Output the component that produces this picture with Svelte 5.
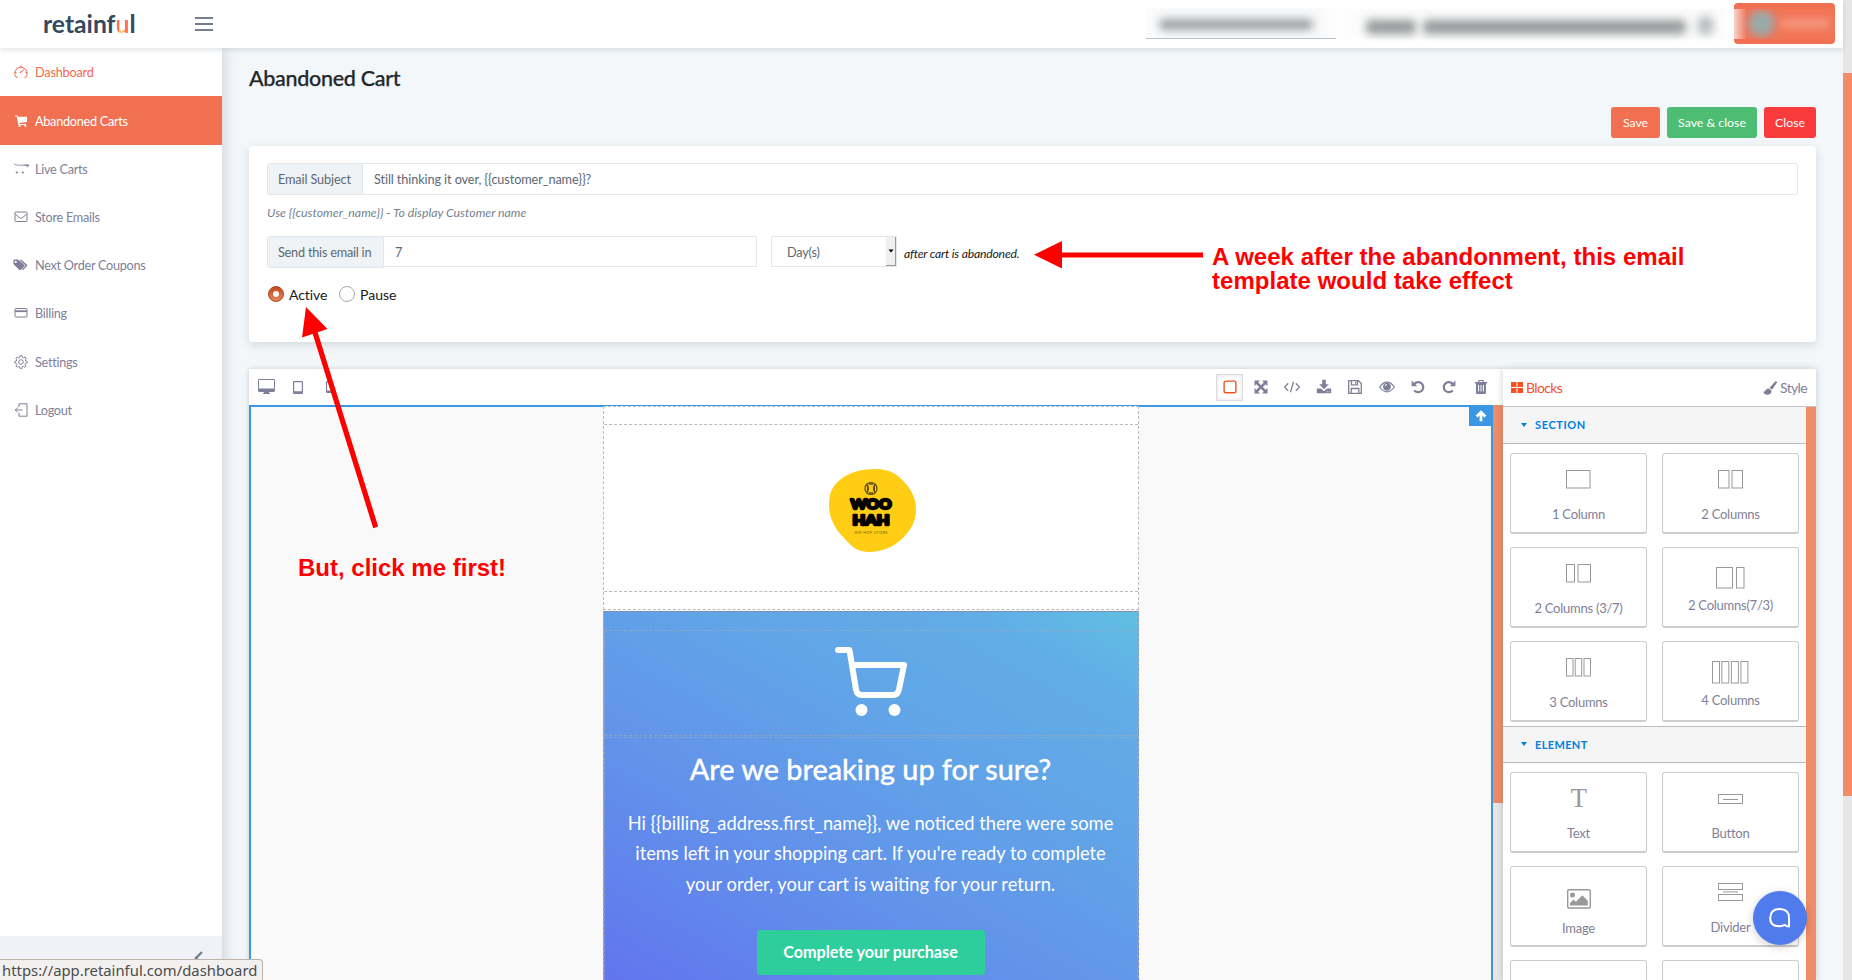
<script>
  const nav = [
    { icon: 'gauge', label: 'Dashboard', tone: 'hot' },
    { icon: 'cart', label: 'Abandoned Carts', tone: 'active' },
    { icon: 'opencart', label: 'Live Carts' },
    { icon: 'mail', label: 'Store Emails' },
    { icon: 'tags', label: 'Next Order Coupons' },
    { icon: 'card', label: 'Billing' },
    { icon: 'gear', label: 'Settings' },
    { icon: 'exit', label: 'Logout' }
  ];
  const tools = ['square', 'expand', 'code', 'download', 'floppy', 'eye', 'undo', 'redo', 'trash'];
  const sections = [
    { icon: 'c1', label: '1 Column' },
    { icon: 'c2', label: '2 Columns' },
    { icon: 'c37', label: '2 Columns (3/7)' },
    { icon: 'c73', label: '2 Columns(7/3)', low: true },
    { icon: 'c3', label: '3 Columns' },
    { icon: 'c4', label: '4 Columns', low: true }
  ];
  const elements = [
    { icon: 'text', label: 'Text' },
    { icon: 'button', label: 'Button' },
    { icon: 'image', label: 'Image', img: true },
    { icon: 'divider', label: 'Divider' },
    { icon: '', label: '' },
    { icon: '', label: '' }
  ];
  const boxes = {
    c1: [[0, 24, 18]],
    c2: [[0, 11, 18], [13.5, 11, 18]],
    c37: [[0, 8.5, 18], [11.5, 13, 18]],
    c73: [[0, 16.5, 21], [20, 8, 21]],
    c3: [[0, 7, 18], [8.7, 7, 18], [17.5, 7, 18]],
    c4: [[0, 7.5, 22], [9.3, 7.5, 22], [18.9, 7.5, 22], [28.4, 7.5, 22]]
  };
  const widths = { c1: 24.5, c2: 24.5, c37: 24.5, c73: 28, c3: 24.5, c4: 36 };
</script>

{#snippet navIcon(name)}
  <svg class="nav-icon" viewBox="0 0 16 16" width="16" height="16" fill="none" stroke="currentColor" stroke-width="1">
    {#if name === 'gauge'}
      <path d="M4.600 12.900 3.200 13.400A6.200 6.200 0 1 1 12.800 13.400L11.400 12.900M8 1.400v1.800M3.300 3.600l1 1M1.800 8.500h1.600M14.200 8.500h-1.600M7.500 8.300 11 5.600" />
      <circle cx="7.400" cy="8.400" r=".8" fill="currentColor" stroke="none" />
    {:else if name === 'cart'}
      <path fill="currentColor" stroke="none" d="M2 2.500h2.600l.4 1.200h9v5.200L6.200 10l.2.9H13v1H5.400L3.800 3.600H2zM5.500 12.200h2v1.600h-2zM11.300 12.200h2v1.600h-2z" />
    {:else if name === 'opencart'}
      <path fill="currentColor" stroke="none" d="M.2 2C2.400 4 6 3.900 15.900 3.600c1 .2-.2 1.800-2.900 3.900 1-1.500 1.800-2.500.4-2.600C7 4.700 1.700 5.100.2 2z" />
      <circle cx="3.800" cy="11.500" r="1.100" fill="currentColor" stroke="none" />
      <circle cx="9.800" cy="11.500" r="1.100" fill="currentColor" stroke="none" />
    {:else if name === 'mail'}
      <rect x="2" y="3" width="12" height="9.500" rx=".8" /><path d="M2.200 5.200 7.300 9.200q.7.500 1.400 0L13.800 5.200" />
    {:else if name === 'tags'}
      <path fill="currentColor" stroke="none" fill-rule="evenodd" d="M.5 2.500h4.600l6.200 5.400q.6.700 0 1.300l-3.700 3.700q-.6.500-1.200 0L.5 7.200zm2.200 1.200a1.100 1.100 0 1 0 .1 0z" />
      <path d="M7.500 2.900 13.600 8.400 9.500 12.800" stroke-width="1.400" />
    {:else if name === 'card'}
      <rect x="2" y="3.500" width="12" height="8.500" rx=".8" /><path d="M2 6.200h12" stroke-width="1.800" />
    {:else if name === 'gear'}
      <path d="M7.100 1.700h1.800l.4 1.700 1.100.5 1.600-.9 1.200 1.300-.9 1.500.4 1.200 1.500.4v1.500l-1.600.5-.5 1.200.9 1.500-1.200 1.200-1.500-.9-1.100.5-.5 1.600H7.200l-.5-1.600-1.100-.5-1.500.9-1.200-1.200.9-1.500-.5-1.200-1.500-.5V7.400l1.500-.4.500-1.200-.9-1.500 1.200-1.200 1.500.9 1.100-.5z" />
      <circle cx="8" cy="8" r="2.300" />
    {:else}
      <path d="M6 5V1.800h8v12.400H6v-3.400M9.500 8H2.200M4.600 5.800 2.200 8l2.400 2.200" />
    {/if}
  </svg>
{/snippet}

{#snippet toolIcon(name)}
  <svg viewBox="0 0 16 16" width="16" height="16" fill="currentColor">
    {#if name === 'square'}
      <rect x="2.100" y="2.100" width="11.800" height="11.600" rx="1.800" fill="none" stroke="#f4511e" stroke-width="1.400" />
    {:else if name === 'expand'}
      <path d="M1.500 1.500H7L5.200 3.300 8 6.200l2.800-2.900L9 1.500h5.500V7l-1.800-1.800L9.800 8l2.900 2.800L14.500 9v5.500H9l1.800-1.800L8 9.800l-2.800 2.900L7 14.500H1.500V9l1.800 1.800L6.200 8 3.300 5.200 1.500 7z" />
    {:else if name === 'code'}
      <path d="M4.200 4.200.6 8l3.600 3.800M11.800 4.200 15.400 8l-3.600 3.800M9.500 2.800 6.500 13.200" fill="none" stroke="currentColor" stroke-width="1.300" />
    {:else if name === 'download'}
      <path fill-rule="evenodd" d="M6.200.8h3.600v4.400h3L8 10.300 3.200 5.200h3zM.8 9.500h4.100L8 12.200l3.100-2.700h4.100v4.700H.8zm10 2.800v.9h.9v-.9zm2 0v.9h.9v-.9z" />
    {:else if name === 'floppy'}
      <path d="M1.700 1.700h9.800l2.800 2.800v9.800H1.700zM4.500 1.700v4.200h6V1.700M4.200 14.300V9.500h7.600v4.800M8.700 2.800v2" fill="none" stroke="currentColor" stroke-width="1.300" />
    {:else if name === 'eye'}
      <path d="M.7 8Q4 3.200 8 3.200T15.300 8Q12 12.800 8 12.800T.7 8z" fill="none" stroke="currentColor" stroke-width="1.200" />
      <path fill-rule="evenodd" d="M8 3.700a4 4 0 1 1-.1 0zM7.900 5A2.300 2.300 0 0 0 5.700 7.300h.8A1.500 1.500 0 0 1 8 5.800z" />
    {:else if name === 'undo'}
      <path d="M1.600 1.500v5.700h5.700L5.500 5.400A3.900 3.900 0 1 1 5.200 10.700L3.300 12A6.200 6.200 0 1 0 3.800 3.700z" />
    {:else if name === 'redo'}
      <path d="M14.400 1.500v5.700H8.700l1.800-1.800A3.900 3.900 0 1 0 10.800 10.700l1.900 1.300A6.200 6.200 0 1 1 12.200 3.700z" />
    {:else}
      <path fill-rule="evenodd" d="M5.500 1h5l.7 2h3v1.500H13v9q0 1.500-1.300 1.500H4.300Q3 15 3 13.500v-9H1.800V3h3zm1 .9L6.200 3h3.600l-.3-1.100zM5.100 6v6.500h1V6zm2.400 0v6.500h1V6zm2.400 0v6.500h1V6z" />
    {/if}
  </svg>
{/snippet}

{#snippet block(item)}
  <div class="block" class:low={item.low} class:img={item.img}>
    {#if boxes[item.icon]}
      <svg width={widths[item.icon] + 0.5} height={boxes[item.icon][0][2] + 1} fill="none" stroke="#999">
        {#each boxes[item.icon] as b}
          <rect x={b[0] + 0.5} y=".5" width={b[1] - 0.5} height={b[2] - 0.5} />
        {/each}
      </svg>
    {:else if item.icon === 'text'}
      <span class="tee">T</span>
    {:else if item.icon === 'button'}
      <svg width="25" height="19" fill="none" stroke="#999"><rect x=".5" y="5.500" width="24" height="9" /><path d="M5 10.500h15" /></svg>
    {:else if item.icon === 'image'}
      <svg width="24" height="20" fill="#999"><rect x=".7" y=".7" width="22.600" height="18.300" rx="1.200" fill="none" stroke="#999" stroke-width="1.400" /><circle cx="5.500" cy="6" r="2.500" /><path d="M3 16.500v-2.600l3.500-3.400 2.500 2.300 6.300-6.500 5.500 5.500v4.700z" /></svg>
    {:else if item.icon === 'divider'}
      <svg width="25" height="19" fill="none" stroke="#999"><rect x=".5" y=".5" width="24" height="6" /><path d="M5 8.900h15" /><rect x=".5" y="11.500" width="24" height="6" /></svg>
    {/if}
    <span class="block-label">{item.label}</span>
  </div>
{/snippet}

<div class="page">
  <header>
    <div class="brand">retainf<span class="u">u</span>l</div>
    <div class="burger"><i></i><i></i><i></i></div>
    <div class="account">
      <div class="store"><i class="smudge"></i></div>
      <div class="key"><i class="smudge k1"></i><i class="smudge k2"></i><i class="smudge k3"></i></div>
      <div class="user"><div class="veil"><i class="face"></i><i class="name"></i></div></div>
    </div>
  </header>

  <div class="body">
    <aside>
      <nav>
        {#each nav as n}
          <div class="nav-item {n.tone ?? ''}">{@render navIcon(n.icon)}<span>{n.label}</span></div>
        {/each}
      </nav>
      <div class="collapse">
        <svg width="12" height="16" fill="none" stroke="#73818f" stroke-width="2.400"><path d="M9 2 3 8l6 6" /></svg>
      </div>
    </aside>

    <main>
      <h1>Abandoned Cart</h1>
      <div class="actions">
        <button class="save">Save</button>
        <button class="saveclose">Save &amp; close</button>
        <button class="close">Close</button>
      </div>

      <section class="form">
        <div class="group">
          <label class="addon subj" for="subject"><span>Email Subject</span></label>
          <div class="field grow" id="subject"><span class="subject-text">Still thinking it over, {'{{customer_name}}'}?</span></div>
        </div>
        <p class="hint"><span>Use {'{{customer_name}}'} - To display Customer name</span></p>
        <div class="group second">
          <div class="addon send"><span>Send this email in</span></div>
          <div class="field seven">7</div>
          <div class="select"><span>Day(s)</span><b><svg width="6" height="4"><path d="M.5.5h5L3 3.500z" fill="#000" /></svg></b></div>
          <em>after cart is abandoned.</em>
        </div>
        <div class="radios">
          <i class="radio on"></i><span class="act">Active</span>
          <i class="radio"></i><span class="pau">Pause</span>
        </div>
      </section>

      <section class="editor">
        <div class="left">
          <div class="toolbar">
            <div class="devices">
              <svg width="17" height="16" fill="#7f7f99"><path fill-rule="evenodd" d="M1.400 0h14.200Q17 0 17 1.400v10.200q0 1.400-1.400 1.400H11v1h1v1H5v-1h1v-1H1.400Q0 13 0 11.600V1.400Q0 0 1.400 0zM1 1v8.500h15V1z" /></svg>
              <svg width="10" height="13" fill="#7f7f99"><path fill-rule="evenodd" d="M1.200 0h7.600Q10 0 10 1.200v10.600Q10 13 8.800 13H1.200Q0 13 0 11.800V1.200Q0 0 1.200 0zM1.200 1.200v9h7.600v-9z" /></svg>
              <svg width="7" height="12" fill="#7f7f99"><path fill-rule="evenodd" d="M1.200 0h4.600Q7 0 7 1.200v9.600Q7 12 5.800 12H1.200Q0 12 0 10.800V1.200Q0 0 1.200 0zM1.100 1.600v7.900h4.800V1.600z" /></svg>
            </div>
            <div class="tools">
              {#each tools as t, i}
                <span class="tool" class:chosen={i === 0}>{@render toolIcon(t)}</span>
              {/each}
            </div>
          </div>
          <div class="canvas-row">
            <div class="canvas">
              <div class="up"><svg width="12" height="12" viewBox="0 0 12 12" fill="none" stroke="#fff" stroke-width="2.800"><path d="M6 11.200V2.500M1.600 6.600 6 2.200l4.400 4.400" /></svg></div>
              <div class="mail">
                <div class="mail-head">
                  <div class="mail-cell">
                    <svg class="woo" width="88" height="84" viewBox="0 0 88 84">
                      <path fill="#ffcd14" d="M0 36C0 24 3 17 12 10 20 4 31 0 46 0c14 0 23 5 31 15 6 7 10 15 10 25 0 12-5 21-14 30-9 8-20 13-33 13-11 0-17-5-25-14C6 60 0 49 0 36z" />
                      <circle cx="42" cy="19.500" r="6" fill="none" stroke="#5c4b0b" stroke-width="1.200" />
                      <path d="M38 15.500q2.600 4 0 8M46 15.500q-2.600 4 0 8M40 15h4M40 24h4" stroke="#5c4b0b" stroke-width="1.500" fill="#5c4b0b" />
                      <g font-family="Lato, sans-serif" font-weight="900" font-size="13.500" stroke="#000" stroke-width="2.300" stroke-linejoin="round" text-anchor="middle">
                        <text x="42" y="40" textLength="41" lengthAdjust="spacingAndGlyphs">WOO</text>
                        <text x="42" y="56" textLength="37" lengthAdjust="spacingAndGlyphs">HAH</text>
                      </g>
                      <text x="42" y="64.500" font-family="Lato, sans-serif" font-size="3.800" fill="#7a6410" text-anchor="middle" textLength="33">HIP HOP STORE</text>
                    </svg>
                  </div>
                </div>
                <div class="hero">
                  <div class="cart-cell">
                    <svg width="74" height="72" viewBox="0 0 74 72" fill="none" stroke="#fff" stroke-width="6" stroke-linecap="round" stroke-linejoin="round">
                      <path d="M4 4h11.500L22 43.500Q23 49 28 49h31q5 0 6-5.500L70 19H20" />
                      <g fill="#fff" stroke="none"><circle cx="27.500" cy="64" r="6" /><circle cx="60.500" cy="64" r="6" /></g>
                    </svg>
                  </div>
                  <div class="copy">
                    <h2><span>Are we breaking up for sure?</span></h2>
                    <p>
                      <span>Hi {'{{billing_address.first_name}}'}, we noticed there were some</span><br />
                      <span>items left in your shopping cart. If you're ready to complete</span><br />
                      <span>your order, your cart is waiting for your return.</span>
                    </p>
                    <div class="cta">Complete your purchase</div>
                  </div>
                </div>
              </div>
            </div>
            <div class="track"><i></i></div>
          </div>
        </div>

        <div class="panel">
          <div class="tabs">
            <span class="tab blocks">
              <svg width="12" height="11" fill="#f4511e"><path d="M0 0h5.500v5H0zM6.500 0H12v5H6.500zM0 6h5.500v5H0zM6.500 6H12v5H6.500z" /></svg>Blocks
            </span>
            <span class="tab">
              <svg width="14" height="14" viewBox="0 0 14 14" fill="#7f7f99"><path d="M13.500.3q.8.600.2 1.700L9.300 8.600 6.400 6.900 11.900.8q.8-.9 1.600-.5zM5.700 7.500l2.900 1.900Q8.400 13.700 4.300 13.800 1 13.800.2 10.300l1.400.5Q2.700 7.700 5.700 7.500z" /></svg>Style
            </span>
          </div>
          <div class="panel-row">
            <div class="library">
              <div class="lib-head">SECTION</div>
              <div class="grid">{#each sections as s}{@render block(s)}{/each}</div>
              <div class="lib-head next">ELEMENT</div>
              <div class="grid">{#each elements as s}{@render block(s)}{/each}</div>
            </div>
            <div class="rail"></div>
          </div>
        </div>
      </section>
    </main>
  </div>

  <div class="page-track"><i></i></div>

  <div class="chat">
    <svg width="22" height="20" viewBox="0 0 22 20" fill="none" stroke="#fff" stroke-width="2"><path d="M20 18.600V10q0-9-9.300-9T1.200 9.800 10.700 18.200q3 0 5-1.400 1.700 1.900 4.300 1.800z" stroke-linejoin="round" /></svg>
  </div>
  <div class="status"><span>https://app.retainful.com/dashboard</span></div>

  <svg class="arrows" width="1852" height="980" fill="#f00">
    <path d="M1034 254.800 1062 241v27.600zM1060 252.400h143v5h-143z" />
    <path d="M306 307 327.500 329 302 337.500zM312.600 333.500l5-1.500 60.600 194.600-5 1.600z" />
  </svg>
  <div class="note n1">A week after the abandonment, this email<br />template would take effect</div>
  <div class="note n2">But, click me first!</div>
</div>

<style>
  :global(body) { margin: 0; overflow: hidden; }
  .page { position: relative; width: 1852px; height: 980px; overflow: hidden; background: #f3f7fa; font-family: Lato, sans-serif; font-size: 13px; color: #5c6873; }
  .page :global(*) { box-sizing: border-box; }
  svg { display: block; flex: none; }
  i { display: block; }

  header { position: relative; z-index: 2; display: flex; align-items: center; width: 1843px; height: 48px; background: #fff; box-shadow: 0 2px 5px rgba(60, 75, 90, .16); }
  .brand { width: 151px; margin-left: 43px; padding-bottom: 1px; font-size: 24.700px; line-height: 40px; font-weight: 700; color: #34495e; }
  .u { background: linear-gradient(90deg, #ff7058 25%, #ffd15c 30%, #ffc15c 65%, #ff7058 70%); background-clip: text; -webkit-text-fill-color: transparent; }
  .burger { display: grid; gap: 4.500px; width: 18px; margin-left: 1px; }
  .burger i { height: 1.500px; background: #73818f; }
  .account { display: flex; margin-left: auto; padding-right: 8px; align-items: center; }
  .store { display: flex; align-items: center; width: 190px; height: 31px; margin: -1px 0 0 -1px; padding-left: 13px; border-bottom: 1px solid #b9c4cb; background: linear-gradient(90deg, #fcfcfd, #f8f9fa 10%, #f8f9fa 90%, #fdfdfd); }
  .smudge { width: 154px; height: 11px; margin-top: 3px; border-radius: 5px; background: #9da0a3; filter: blur(4.500px); }
  .key { display: flex; align-items: center; gap: 7px; width: 398px; height: 30px; padding-left: 30px; background: linear-gradient(90deg, #fff, #f9faf9 8%, #f9faf9 94%, #fff); }
  .k1 { width: 50px; height: 14px; margin-top: 5px; background: #959a9b; }
  .k2 { width: 263px; height: 14px; margin-top: 5px; background: #979b9d; }
  .k3 { width: 15px; height: 17px; margin-left: 5px; background: #b5babc; }
  .user { width: 101px; height: 41px; margin-top: -1px; border-radius: 4px; background: #f27052; display: flex; align-items: center; overflow: hidden; }
  .veil { display: flex; align-items: center; width: 100%; height: 30px; overflow: hidden; background: linear-gradient(90deg, #f9d3cb, #f27456 13%); }
  .face { width: 27px; height: 27px; margin-left: 14px; border-radius: 50%; background: #99aaa9; filter: blur(4px); }
  .name { width: 48px; height: 9px; margin-left: 6px; background: #f69a83; filter: blur(4px); }

  .body { display: flex; width: 1843px; height: 932px; }
  aside { position: relative; display: flex; flex-direction: column; justify-content: space-between; width: 222px; background: #fff; box-shadow: 2px 0 13px rgba(60, 75, 90, .22); }
  .nav-item { display: flex; align-items: center; height: 48.100px; padding: 0 0 0 12.500px; color: #7f7f99; font-size: 12.700px; letter-spacing: -.28px; }
  .nav-icon { margin-right: 6.500px; }
  .hot { color: #f4694b; letter-spacing: -.2px; }
  .active { height: 49px; background: #f27052; color: #fff; }
  .collapse { display: flex; justify-content: flex-end; height: 44px; padding: 14px 17px 0 0; background: #f0f2f8; }

  main { flex: 1; display: flex; flex-direction: column; padding: 0 27px; }
  main > :global(*) { flex: none; }
  h1 { margin: 16px 0 0; font-size: 21.500px; line-height: 28px; font-weight: 500; letter-spacing: -.3px; color: #23282c; -webkit-text-stroke: .25px #23282c; }
  .actions { display: flex; justify-content: flex-end; gap: 7px; height: 31px; margin-top: 15px; }
  button { padding: 0; border: 0; border-radius: 3px; font: 12.300px Lato, sans-serif; color: #fff; }
  .save { width: 49px; background: #f27052; }
  .saveclose { width: 90px; background: #4dbd74; }
  .close { width: 52px; background: #f93b3c; }

  .form { height: 196px; margin-top: 8px; padding: 17px 18px; border-radius: 4px; background: #fff; box-shadow: 0 3px 10px rgba(60, 75, 90, .18); }
  .group { display: flex; height: 32px; font-size: 12.700px; letter-spacing: -.2px; }
  .addon { display: flex; align-items: center; padding-left: 10px; border: 1px solid #e4e7ea; border-radius: 3px 0 0 3px; background: #f0f3f5; height: 32px; }
  .subj { width: 96px; letter-spacing: -.12px; }
  .subject-text { letter-spacing: -.1px; }
  .send { width: 117px; letter-spacing: -.22px; }
  .field { display: flex; align-items: center; border: 1px solid #e4e7ea; border-left: 0; padding-left: 11px; }
  .grow { flex: 1; border-radius: 0 3px 3px 0; }
  .hint { margin: 9.500px 0 0; height: 16px; font-size: 12.300px; line-height: 16px; font-style: italic; color: #73818f; }
  .second { margin-top: 15.500px; }
  .seven { width: 373px; height: 31px; }
  .select { display: flex; justify-content: space-between; align-items: center; width: 126px; height: 31px; margin-left: 14px; padding-left: 15px; border: 1px solid #e4e7ea; }
  .select b { display: flex; align-items: center; justify-content: center; width: 10px; height: 29px; background: #f0efee; border-right: 1px solid #999; border-bottom: 1px solid #999; }
  em { margin: 9.500px 0 0 7px; font-size: 12.200px; line-height: 16px; color: #16181b; letter-spacing: -.2px; }
  .radios { display: flex; align-items: center; height: 20px; margin-top: 16px; font-size: 14px; color: #16181b; }
  .radio { width: 16px; height: 16px; margin-left: 1px; border-radius: 50%; border: 1px solid #a9a9a9; background: #fff; }
  .on { border-color: #a3471f; background: radial-gradient(circle, #fff 2.500px, transparent 3.500px), linear-gradient(#c24b1b, #e8855a); }
  .act { width: 49px; margin-left: 5px; letter-spacing: -.1px; }
  .pau { margin-left: 5px; }

  .editor { display: flex; height: 611px; margin-top: 27px; }
  .left { width: 1254px; display: flex; flex-direction: column; box-shadow: 0 0 5px rgba(60, 75, 90, .25); }
  .toolbar { display: flex; justify-content: space-between; align-items: center; height: 36px; padding-left: 9px; background: #fff; }
  .devices { display: flex; align-items: center; gap: 18px; }
  .devices svg:last-child { margin-left: 5px; }
  .tools { display: flex; gap: 0; padding-right: 6.500px; }
  .tool { display: grid; place-items: center; width: 31.400px; height: 27px; color: #7f7f99; }
  .chosen { width: 27px; margin-right: 2px; border: 1px solid #dcdcdc; box-shadow: inset 0 0 4px rgba(0, 0, 0, .12); }
  .canvas-row { display: flex; flex: 1; }
  .canvas { position: relative; width: 1244px; height: 575px; border: 2px solid #3b97e3; border-bottom: 0; background: #f9f9f9; display: flex; justify-content: center; }
  .up { position: absolute; top: -2px; right: -2px; display: grid; place-items: center; width: 24px; height: 21px; background: #3b97e3; }
  .mail { width: 536px; margin-left: -1px; display: flex; flex-direction: column; }
  .mail-head { height: 204px; margin-top: -1px; padding: 17px 0; border: 1px dashed #bbb; background: #fff; }
  .mail-cell { height: 168px; border: 1px dashed #bbb; border-width: 1px 0; padding: 43.500px 0 0 225px; }
  .hero { flex: 1; margin-top: 1px; padding-top: 18px; border: 1px dashed #a5a8b5; border-top: 1px solid #7b8fb3; background: linear-gradient(29deg, #616eee 0%, #6180ed 20%, #6294ea 43%, #61a5e7 68%, #61ace7 86%, #60bfe2 100%); }
  .cart-cell { height: 106px; padding: 15px 0 0 229px; border: 1px dashed rgba(175, 170, 175, .6); }
  .copy { height: 300px; margin-top: 1px; border: 1px dashed rgba(175, 170, 175, .6); text-align: center; color: #fff; }
  h2 { margin: 12px 0 0; font-size: 28.800px; line-height: 38px; font-weight: 500; -webkit-text-stroke: .3px #fff; }
  .copy p { margin: 19.500px 0 0; font-size: 18.300px; line-height: 30.600px; white-space: nowrap; }
  .cta { width: 228px; height: 45px; margin: 30.500px auto 0; border-radius: 3px; background: #2dce9c; font-size: 16.200px; line-height: 44px; font-weight: 700; }
  .track { width: 10px; background: #e6e6e6; }
  .track i { height: 398px; background: #ef8d67; }

  .panel { position: relative; width: 313px; display: flex; flex-direction: column; background: #fff; box-shadow: 0 0 7px rgba(60, 75, 90, .28); }
  .tabs { display: flex; justify-content: space-between; height: 38px; padding: 0 9px 0 8px; border-bottom: 1px solid #c4c4c4; font-size: 14px; letter-spacing: -.65px; }
  .tab { display: flex; align-items: center; gap: 3px; color: #7f7f99; }
  .blocks { color: #f4511e; }
  .panel-row { display: flex; flex: 1; overflow: hidden; }
  .library { width: 303px; }
  .rail { width: 10px; background: #ef8d67; }
  .lib-head { display: flex; align-items: center; height: 37px; padding: 0 0 1px 18px; border-bottom: 1px solid #bbb; background: #f5f5f5; color: #0080dd; font-size: 11px; font-weight: 700; letter-spacing: .6px; }
  .lib-head::before { content: ''; margin-right: 8px; border: 3.500px solid transparent; border-top: 4px solid #0080dd; border-bottom: 0; }
  .next { margin-top: 4px; border-top: 1px solid #bbb; letter-spacing: .35px; }
  .grid { display: grid; grid-template-columns: 137px 137px; gap: 13px 15px; padding: 9px 7px 0; }
  .block { display: flex; flex-direction: column; align-items: center; height: 81px; padding-top: 16px; border: 1px solid #ccc; border-bottom-width: 2px; border-radius: 3px; color: #7f7f99; font-size: 13px; line-height: 18px; letter-spacing: -.25px; }
  .block-label { margin-top: 16px; }
  .low { padding-top: 19px; }
  .low .block-label { margin-top: 6.500px; }
  .img { padding-top: 22px; }
  .img .block-label { margin-top: 10px; }
  .tee { height: 19px; font: 27px/18px "Liberation Serif", serif; color: #999; }

  .page-track { position: absolute; top: 0; right: 0; width: 9px; height: 980px; padding-top: 73px; background: #e6e6e6; }
  .page-track i { height: 723px; background: #ef8d67; }
  .chat { position: absolute; left: 1753px; top: 891px; display: grid; place-items: center; width: 54px; height: 54px; border-radius: 50%; background: #507bec; box-shadow: 0 2px 8px rgba(0, 0, 0, .2); }
  .status { position: absolute; left: 0; bottom: 0; width: 263px; height: 21px; padding-left: 2px; border: 1px solid #bbb3ac; border-width: 1px 1px 0 0; border-radius: 0 4px 0 0; background: #f2f1f0; color: #4c4c4c; font: 14.850px/21px "Noto Sans", sans-serif; white-space: nowrap; }
  .arrows { position: absolute; left: 0; top: 0; }
  .note { position: absolute; font: 700 24px/24.500px "Liberation Sans", sans-serif; color: #f00; white-space: nowrap; }
  .n1 { left: 1212px; top: 244.500px; letter-spacing: .03px; }
  .n2 { left: 298px; top: 556px; }
</style>
